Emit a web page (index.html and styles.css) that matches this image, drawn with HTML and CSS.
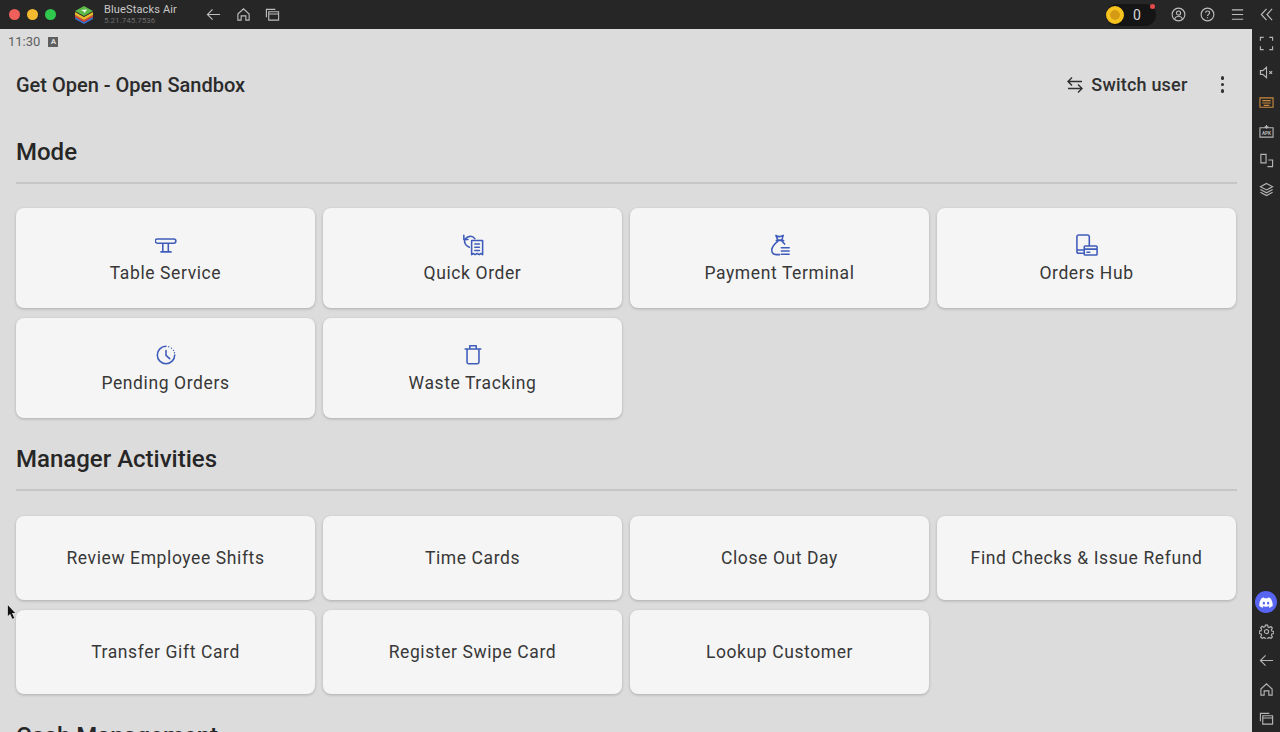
FILE: index.html
```html
<!DOCTYPE html>
<html lang="en">
<head>
    <meta charset="UTF-8">
    <meta name="viewport" content="width=device-width, initial-scale=1.0">
    <title>BlueStacks Air - Get Open</title>
    <link rel="stylesheet" href="styles.css">
</head>
<body>
    <!-- Emulator title bar -->
    <div class="title-bar">
        <div class="traffic">
            <span class="dot dot-red"></span>
            <span class="dot dot-yellow"></span>
            <span class="dot dot-green"></span>
        </div>
        <svg class="logo" viewBox="0 0 20 18">
            <path d="M1 11 L10 16 L19 11 L19 13 L10 18 L1 13Z" fill="#3a6fd0"/>
            <path d="M1 9 L10 14 L19 9 L19 11 L10 16 L1 11Z" fill="#d8483a"/>
            <path d="M1 6 L10 11 L19 6 L19 9 L10 14 L1 9Z" fill="#e8b52c"/>
            <path d="M1 5 L10 0 L19 5 L10 10Z" fill="#5cba47"/>
            <path d="M7 4 L13 3.500 L10.500 7 L10 5.500Z" fill="#fff"/>
        </svg>
        <div class="app-name">
            <div class="app-title">BlueStacks Air</div>
            <div class="app-version">5.21.745.7536</div>
        </div>
        <div class="bar-nav">
            <svg class="bar-icon" viewBox="0 0 16 16"><path d="M15 8H1.500M7 2.500 1.500 8 7 13.500"/></svg>
            <svg class="bar-icon" viewBox="0 0 16 16"><path d="M2 7.500 8 2l6 5.500V14h-3.500V9.500h-5V14H2Z"/></svg>
            <svg class="bar-icon" viewBox="0 0 16 16"><path d="M1.500 11V2.500H11M4 5h10.500v9H4ZM4 7.500h10.500"/></svg>
        </div>
        <div class="bar-right">
            <div class="coins">
                <span class="coin"></span>
                <span class="coin-count">0</span>
                <span class="coin-badge"></span>
            </div>
            <svg class="bar-icon" viewBox="0 0 16 16"><circle cx="8" cy="8" r="6.800"/><circle cx="8" cy="6.400" r="2.200"/><path d="M3.800 12.600c1-2 2.500-2.800 4.200-2.800s3.200.8 4.200 2.800"/></svg>
            <svg class="bar-icon" viewBox="0 0 16 16"><circle cx="8" cy="8" r="6.800"/><path d="M5.900 6.200C6 4.900 7 4.300 8 4.300c1.200 0 2.200.8 2.200 1.900 0 1.600-2.200 1.700-2.200 3.400M8 11v1"/></svg>
            <svg class="bar-icon" viewBox="0 0 16 16"><path d="M2 3h12M2 8h12M2 13h12"/></svg>
            <svg class="bar-icon" viewBox="0 0 16 16"><path d="M8 2 2.500 8 8 14M14 2 8.500 8 14 14"/></svg>
        </div>
    </div>

    <div class="window">
        <div class="screen">
            <div class="status-bar">
                <span>11:30</span>
                <span class="status-badge">A</span>
            </div>

            <div class="app-bar">
                <div class="app-bar-title">Get Open - Open Sandbox</div>
                <div class="switch-user">
                    <svg class="switch-icon" viewBox="0 0 18 18"><path d="M16 5.500H2.500M6 1.500 2 5.500 6 9.500M2 12.500h13.500M12 8.500l4 4-4 4"/></svg>
                    <span>Switch user</span>
                </div>
                <div class="more"><span></span><span></span><span></span></div>
            </div>

            <div class="section section-mode">
                <h2>Mode</h2>
                <div class="divider"></div>
                <div class="grid grid-icons">
                    <div class="card">
                        <svg class="card-icon" viewBox="0 0 24 24"><path d="M2.500 5.500h18a2 2 0 0 1 0 4.500h-18a2 2 0 0 1 0-4.500ZM8.500 10v9.500M14.500 10v9.500M6.500 19.500h11"/></svg>
                        <span>Table Service</span>
                    </div>
                    <div class="card">
                        <svg class="card-icon" viewBox="0 0 24 24"><path d="M10.500 7h12v15.500l-1.800-1.200-2 1.200-2.200-1.200-2.200 1.200-2-1.200-1.800 1.200ZM14 11h5M14 14.500h5M14 18h5M8 14.500C3 12.500 1.500 8 4 5s7.500-3.500 10 0M2 1.500V6h4.500"/></svg>
                        <span>Quick Order</span>
                    </div>
                    <div class="card">
                        <svg class="card-icon" viewBox="0 0 24 24"><path d="M7.500 1.500c2 1.500 5.500 1.500 8 0L14 6.500H9.500ZM8 7h8M10 7.500C7 10 3 13.500 3 17.500c0 3 2 5 5 5h3.500M14 7.500l3 3.500M13.500 15h8.500M13.500 18.500h8.500M13.500 22h8.500"/></svg>
                        <span>Payment Terminal</span>
                    </div>
                    <div class="card">
                        <svg class="card-icon" viewBox="0 0 24 24"><path d="M8 21H3a2 2 0 0 1-2-2V3a2 2 0 0 1 2-2h9.500a2 2 0 0 1 2 2v9.500M1 17.500h7M10 13h12a1 1 0 0 1 1 1v8a1 1 0 0 1-1 1H10a1 1 0 0 1-1-1v-8a1 1 0 0 1 1-1ZM9 16.500h14M12 20h3"/></svg>
                        <span>Orders Hub</span>
                    </div>
                    <div class="card">
                        <svg class="card-icon" viewBox="0 0 24 24"><path d="M12 2.500a9.500 9.500 0 1 0 9.500 9.500M12 7v5.500l4 3.500"/><path class="dots" d="M15 3v0M18 4.500v0M20.200 7v0M21.300 9.500v0"/></svg>
                        <span>Pending Orders</span>
                    </div>
                    <div class="card">
                        <svg class="card-icon" viewBox="0 0 24 24"><path d="M3.500 5.500h17M8.500 5.500V2h7v3.500M5.500 5.500v14.500a1.500 1.500 0 0 0 1.500 1.500h10a1.500 1.500 0 0 0 1.500-1.500V5.500"/></svg>
                        <span>Waste Tracking</span>
                    </div>
                </div>
            </div>

            <div class="section section-manager">
                <h2>Manager Activities</h2>
                <div class="divider"></div>
                <div class="grid grid-plain">
                    <div class="card"><span>Review Employee Shifts</span></div>
                    <div class="card"><span>Time Cards</span></div>
                    <div class="card"><span>Close Out Day</span></div>
                    <div class="card"><span>Find Checks &amp; Issue Refund</span></div>
                    <div class="card"><span>Transfer Gift Card</span></div>
                    <div class="card"><span>Register Swipe Card</span></div>
                    <div class="card"><span>Lookup Customer</span></div>
                </div>
            </div>

            <div class="section section-cash">
                <h2>Cash Management</h2>
            </div>

            <!-- Mouse pointer caught in the capture -->
            <svg class="pointer" viewBox="0 0 10 16"><path d="M1 0 9 8.500H5.500L8 14l-2 1-2.500-5.500L1 12Z"/></svg>
        </div>

        <!-- Emulator side bar -->
        <div class="side-bar">
            <div class="side-group">
                <svg class="side-icon" viewBox="0 0 16 16"><path d="M1.500 5V1.500H5M11 1.500h3.500V5M14.500 11v3.500H11M5 14.500H1.500V11"/></svg>
                <svg class="side-icon" viewBox="0 0 16 16"><path d="M1.500 6v4h2.500l4 3.500v-11L4 6ZM11 6.500l3 3M14 6.500l-3 3"/></svg>
                <svg class="side-icon side-icon-orange" viewBox="0 0 16 16"><path d="M1 3h14v10H1ZM3.500 6h9M3.500 8.500h9M5 11h6"/></svg>
                <svg class="side-icon" viewBox="0 0 16 16"><path d="M1 4h14v10H1ZM8 1v4M6 3h4"/><text class="apk-text" x="8" y="12">APK</text></svg>
                <svg class="side-icon" viewBox="0 0 16 16"><path d="M2 1.500h5.500v9H2ZM10 7.500h4.500v7H9"/></svg>
                <svg class="side-icon" viewBox="0 0 16 16"><path d="M8 1.500 14.500 5 8 8.500 1.500 5ZM1.500 8 8 11.500 14.500 8M1.500 11 8 14.500 14.500 11"/></svg>
            </div>
            <div class="side-group side-bottom">
                <div class="discord">
                    <svg viewBox="0 0 24 18"><path d="M20 2A19 19 0 0 0 15.500.500l-.6 1.300a17 17 0 0 0-5.800 0L8.500.500A19 19 0 0 0 4 2C1 6.400.300 10.700.600 15A19 19 0 0 0 6.300 18l1.200-2-1.900-.9.500-.4a13.500 13.500 0 0 0 11.800 0l.5.400-1.900.9 1.200 2a19 19 0 0 0 5.700-3c.4-5-.8-9.200-3.400-13ZM8.300 12.400c-1.100 0-2-1-2-2.300s.9-2.300 2-2.300 2 1 2 2.300-.9 2.300-2 2.300Zm7.400 0c-1.100 0-2-1-2-2.300s.9-2.300 2-2.300 2 1 2 2.300-.9 2.300-2 2.300Z"/></svg>
                </div>
                <svg class="side-icon" viewBox="0 0 16 16"><circle cx="8" cy="8" r="2.200"/><path d="M6.800 1.200h2.400l.4 2 1.300.6 1.800-1.100 1.600 1.700-1.100 1.700.5 1.300 2 .5v2.300l-2 .5-.5 1.300 1.100 1.700-1.600 1.700-1.800-1.100-1.300.6-.4 1.300H6.800l-.4-1.300-1.300-.6-1.800 1.100-1.600-1.700 1.100-1.700-.5-1.300-2-.5V7.600l2-.5.500-1.300-1.100-1.700 1.600-1.700 1.800 1.100 1.300-.6Z"/></svg>
                <svg class="side-icon" viewBox="0 0 16 16"><path d="M15 8H1.500M7 2.500 1.500 8 7 13.500"/></svg>
                <svg class="side-icon" viewBox="0 0 16 16"><path d="M2 7.500 8 2l6 5.500V14h-3.500V9.500h-5V14H2Z"/></svg>
                <svg class="side-icon" viewBox="0 0 16 16"><path d="M1.500 11V2.500H11M4 5h10.500v9H4ZM4 7.500h10.500"/></svg>
            </div>
        </div>
    </div>
</body>
</html>
```

FILE: styles.css
```css
* {
    margin: 0;
    padding: 0;
    box-sizing: border-box;
}

html,
body {
    height: 732px;
    overflow: hidden;
}

body {
    font-family: Roboto, 'Liberation Sans', sans-serif;
    background: #262626;
    display: flex;
    flex-direction: column;
}

/* Title bar */
.title-bar {
    height: 29px;
    background: #262626;
    display: flex;
    align-items: center;
    flex-shrink: 0;
}

.traffic {
    display: flex;
    gap: 7px;
    margin-left: 9px;
}

.dot {
    width: 11px;
    height: 11px;
    border-radius: 50%;
}

.dot-red { background: #f0605a; }
.dot-yellow { background: #f4b92f; }
.dot-green { background: #2fc84d; }

.logo {
    width: 20px;
    height: 18px;
    margin-left: 18px;
}

.app-name {
    margin-left: 10px;
    width: 90px;
}

.app-title {
    font-size: 11px;
    line-height: 13px;
    letter-spacing: 0.15px;
    color: #c8c8c8;
}

.app-version {
    font-size: 8px;
    line-height: 10px;
    color: #6d6d6d;
}

.bar-nav {
    display: flex;
    gap: 14.500px;
    margin-left: 12px;
}

.bar-right {
    margin-left: auto;
    display: flex;
    align-items: center;
    gap: 14.500px;
    padding-right: 6px;
}

.bar-icon {
    width: 15px;
    height: 15px;
    fill: none;
    stroke: #bdbdbd;
    stroke-width: 1.200;
}

.coins {
    position: relative;
    width: 50px;
    height: 22px;
    border-radius: 11px;
    background: #151515;
    display: flex;
    align-items: center;
}

.coin {
    width: 18px;
    height: 18px;
    border-radius: 50%;
    background: #f2b01e;
    border: 4px solid #f6c21d;
    box-shadow: inset 0 0 0 5px #d59a14;
}

.coin-count {
    margin-left: 9px;
    font-size: 14px;
    color: #d8d8d8;
}

.coin-badge {
    position: absolute;
    top: 0;
    right: 1px;
    width: 5px;
    height: 5px;
    border-radius: 50%;
    background: #e8484a;
}

/* Main area */
.window {
    flex: 1;
    min-height: 0;
    display: flex;
}

.screen {
    position: relative;
    flex: 1;
    min-width: 0;
    background: #dcdcdc;
    overflow: hidden;
}

.status-bar {
    height: 25px;
    padding-left: 8px;
    display: flex;
    align-items: center;
    gap: 8px;
    font-size: 13px;
    color: #5f5f5f;
}

.status-badge {
    width: 10px;
    height: 10px;
    background: #5f5f5f;
    color: #dcdcdc;
    font-size: 8px;
    font-weight: 700;
    line-height: 10px;
    text-align: center;
}

.app-bar {
    height: 61px;
    padding: 0 28px 0 16px;
    display: flex;
    align-items: center;
}

.app-bar-title {
    flex: 1;
    font-size: 20px;
    font-weight: 500;
    color: #2b2b2b;
}

.switch-user {
    display: flex;
    align-items: center;
    gap: 7px;
    font-size: 18px;
    font-weight: 500;
    letter-spacing: 0.2px;
    color: #303030;
}

.switch-icon {
    width: 18px;
    height: 18px;
    fill: none;
    stroke: #303030;
    stroke-width: 1.400;
}

.more {
    display: flex;
    flex-direction: column;
    gap: 3px;
    margin-left: 33px;
}

.more span {
    width: 3.500px;
    height: 3.500px;
    border-radius: 50%;
    background: #303030;
}

.section {
    width: 1221px;
    margin-left: 16px;
}

.section-mode {
    margin-top: 20px;
}

.section-manager {
    margin-top: 24px;
}

.section-cash {
    margin-top: 25px;
}

h2 {
    font-size: 24px;
    font-weight: 500;
    line-height: 34px;
    color: #262626;
}

.divider {
    height: 2px;
    margin-top: 13px;
    background: #c6c6c6;
}

.grid {
    display: grid;
    grid-template-columns: repeat(4, 299px);
    column-gap: 8px;
    row-gap: 10px;
    margin-top: 24px;
}

.grid-icons {
    grid-auto-rows: 100px;
}

.grid-plain {
    grid-auto-rows: 84px;
    margin-top: 25px;
}

.card {
    background: #f5f5f5;
    border-radius: 8px;
    box-shadow: 0 1px 3px rgba(0, 0, 0, 0.22);
    display: flex;
    flex-direction: column;
    align-items: center;
    justify-content: center;
    font-size: 17.500px;
    letter-spacing: 0.6px;
    color: #383838;
}

.card-icon {
    width: 22px;
    height: 22px;
    margin-bottom: 7px;
    fill: none;
    stroke: #3f5cba;
    stroke-width: 1.700;
    stroke-linejoin: round;
    stroke-linecap: round;
}

.card-icon .dots {
    stroke-width: 1.500;
}

.pointer {
    position: absolute;
    left: 7px;
    top: 576px;
    width: 9px;
    height: 15px;
    fill: #111;
}

/* Side bar */
.side-bar {
    width: 28px;
    flex-shrink: 0;
    background: #262626;
    display: flex;
    flex-direction: column;
    align-items: center;
    justify-content: space-between;
    padding: 7px 0 6px;
}

.side-group {
    display: flex;
    flex-direction: column;
    align-items: center;
    gap: 14.300px;
}

.side-bottom {
    gap: 14px;
}

.side-icon {
    width: 15px;
    height: 15px;
    fill: none;
    stroke: #b5b5b5;
    stroke-width: 1.200;
}

.side-icon-orange {
    stroke: #c98a3c;
}

.apk-text {
    font-size: 5px;
    font-weight: 700;
    fill: #b5b5b5;
    stroke: none;
    text-anchor: middle;
}

.discord {
    width: 22px;
    height: 22px;
    border-radius: 50%;
    background: #5865f2;
    display: flex;
    align-items: center;
    justify-content: center;
    margin-bottom: -3px;
}

.discord svg {
    width: 14px;
    height: 11px;
    fill: #fff;
}
```
